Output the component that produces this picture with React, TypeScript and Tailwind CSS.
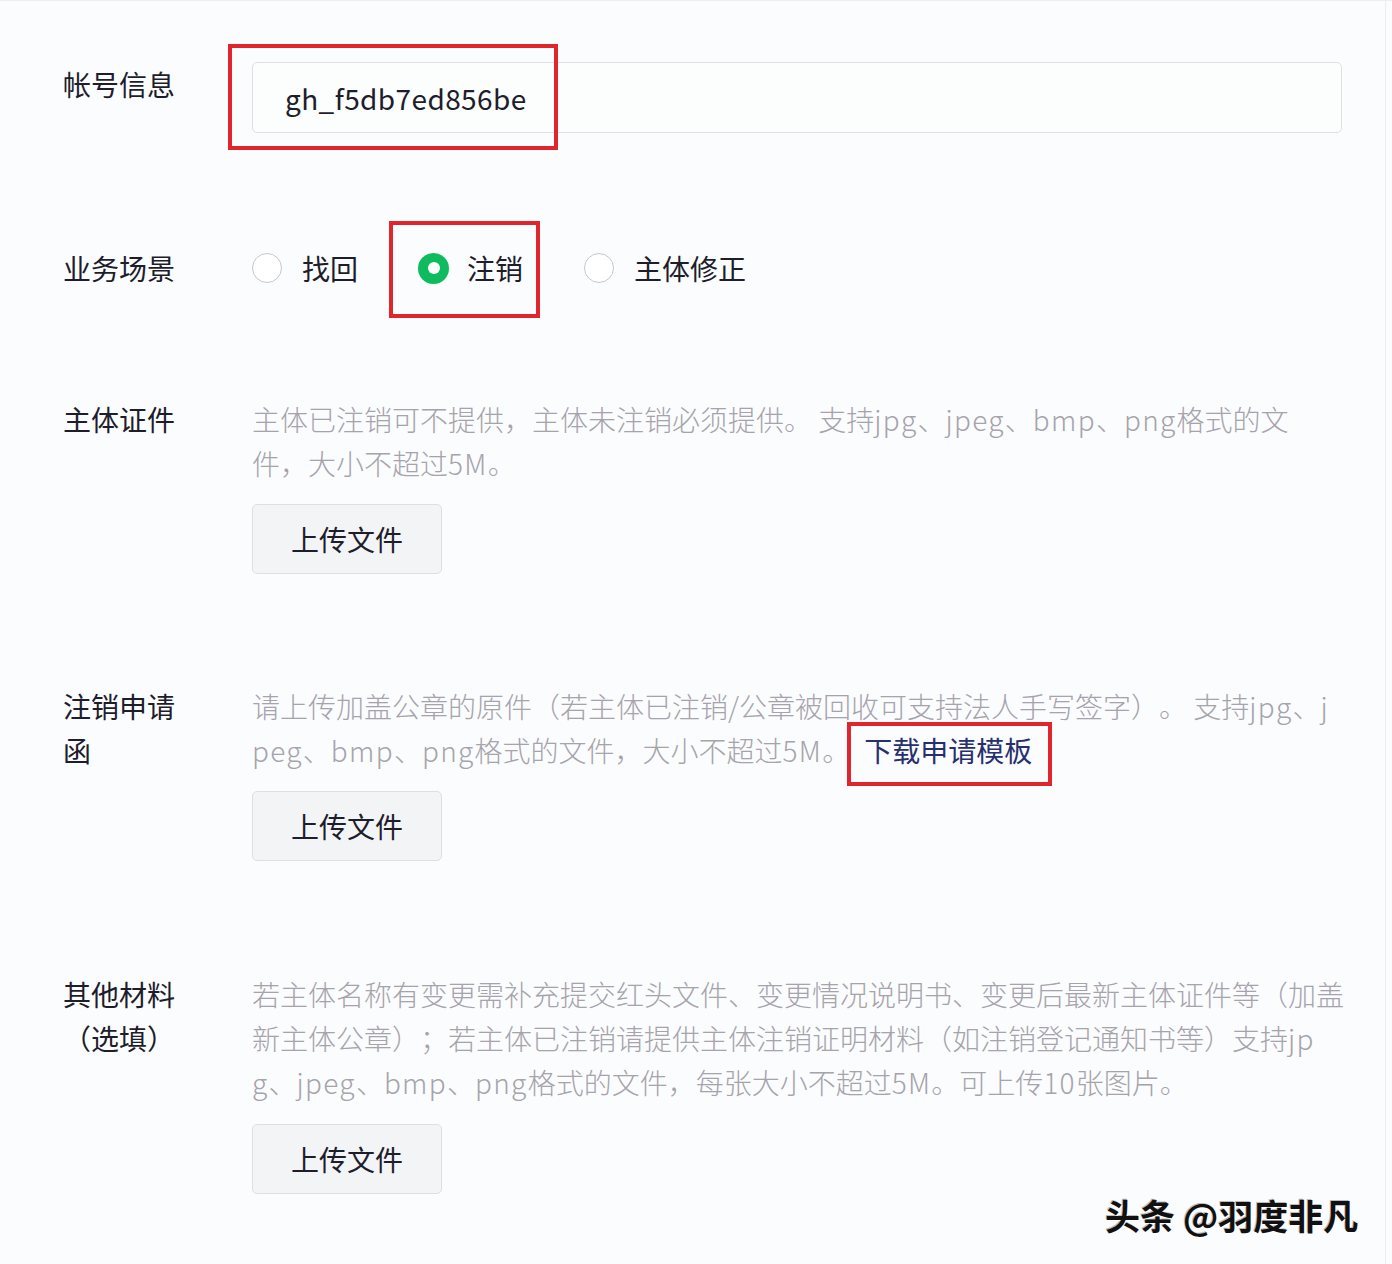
import React from "react";

const FONT = { fontFamily: '"Noto Sans CJK SC", "Noto Sans", sans-serif' };

function Label({ children }: { children: React.ReactNode }) {
  return (
    <div className="w-[189px] shrink-0 text-[28px] leading-[44px] text-[#1e1d2c] [text-spacing-trim:space-all]">
      {children}
    </div>
  );
}

function Latinize({ text }: { text: string }) {
  const parts = text.split(/([A-Za-z0-9]+)/);
  return (
    <>
      {parts.map((p, i) =>
        i % 2 === 1 ? (
          <span key={i} className="tracking-[1.3px]">
            {p}
          </span>
        ) : (
          <React.Fragment key={i}>{p}</React.Fragment>
        )
      )}
    </>
  );
}

function Desc({ lines }: { lines: React.ReactNode[] }) {
  return (
    <div className="text-[28px] leading-[44px] font-light text-[#a6a3ac] [text-spacing-trim:space-all]">
      {lines.map((l, i) => (
        <div key={i} className="whitespace-nowrap">
          {typeof l === "string" ? <Latinize text={l} /> : l}
        </div>
      ))}
    </div>
  );
}

function UploadButton({ className = "" }: { className?: string }) {
  return (
    <button
      className={`w-[190px] h-[70px] rounded-[5px] border border-[#dcdfe4] bg-[#f3f4f6] text-[28px] text-[#1e1d2c] flex items-center justify-center ${className}`}
    >
      上传文件
    </button>
  );
}

function Radio({ checked }: { checked?: boolean }) {
  if (checked) {
    return (
      <span className="w-[31px] h-[31px] rounded-full bg-[#0ebc5f] flex items-center justify-center shrink-0">
        <span className="w-[12px] h-[12px] rounded-full bg-white" />
      </span>
    );
  }
  return <span className="w-[30px] h-[30px] rounded-full border border-[#c4c8ce] bg-white shrink-0" />;
}

export default function App() {
  return (
    <div
      style={FONT}
      className="relative w-[1392px] h-[1264px] bg-[#fbfcfd] border-t border-[#eceef1] overflow-hidden"
    >
      <div className="absolute right-[6px] top-0 bottom-0 w-px bg-[#eceef1]" />
      <div className="pl-[63px] flex flex-col">
        {/* 帐号信息 */}
        <div className="flex mt-[61px]">
          <Label>帐号信息</Label>
          <div className="relative w-[1090px]">
            <div className="h-[71px] rounded-[5px] border border-[#dde1e6] bg-[#fcfdfd] flex items-center pl-[32px] text-[28px] tracking-[0.4px] text-[#1e1d2c]">
              gh_f5db7ed856be
            </div>
            <div className="absolute left-[-24px] top-[-18px] w-[330px] h-[106px] border-[4px] border-[#e0262c]" />
          </div>
        </div>

        {/* 业务场景 */}
        <div className="flex mt-[113px] items-center h-[44px]">
          <Label>业务场景</Label>
          <div className="flex items-center text-[28px] text-[#1e1d2c]">
            <div className="flex items-center gap-[20px]">
              <Radio />
              <span>找回</span>
            </div>
            <div className="relative flex items-center gap-[18px] ml-[60px]">
              <Radio checked />
              <span>注销</span>
              <div className="absolute left-[-29px] top-[-26px] w-[151px] h-[97px] border-[4px] border-[#e0262c]" />
            </div>
            <div className="flex items-center gap-[20px] ml-[61px]">
              <Radio />
              <span>主体修正</span>
            </div>
          </div>
        </div>

        {/* 主体证件 */}
        <div className="flex mt-[107px]">
          <Label>主体证件</Label>
          <div className="flex flex-col">
            <Desc
              lines={[
                "主体已注销可不提供，主体未注销必须提供。 支持jpg、jpeg、bmp、png格式的文",
                "件，大小不超过5M。",
              ]}
            />
            <UploadButton className="mt-[19px]" />
          </div>
        </div>

        {/* 注销申请函 */}
        <div className="flex mt-[110px]">
          <Label>
            注销申请
            <br />函
          </Label>
          <div className="flex flex-col">
            <Desc
              lines={[
                "请上传加盖公章的原件（若主体已注销/公章被回收可支持法人手写签字）。 支持jpg、j",
                <>
                  <Latinize text="peg、bmp、png格式的文件，大小不超过5M。" />
                  <span className="relative ml-[14px] font-normal text-[#27306e]">
                    下载申请模板
                    <span className="absolute left-[-17px] right-[-20px] top-[-8px] bottom-[-16px] border-[4px] border-[#e0262c]" />
                  </span>
                </>,
              ]}
            />
            <UploadButton className="mt-[19px]" />
          </div>
        </div>

        {/* 其他材料 */}
        <div className="flex mt-[111px]">
          <Label>
            其他材料
            <br />（选填）
          </Label>
          <div className="flex flex-col">
            <Desc
              lines={[
                "若主体名称有变更需补充提交红头文件、变更情况说明书、变更后最新主体证件等（加盖",
                "新主体公章）；若主体已注销请提供主体注销证明材料（如注销登记通知书等）支持jp",
                "g、jpeg、bmp、png格式的文件，每张大小不超过5M。可上传10张图片。",
              ]}
            />
            <UploadButton className="mt-[20px]" />
          </div>
        </div>
      </div>

      {/* watermark */}
      <div
        className="absolute left-[1105px] top-[1191px] text-[35px] leading-[46px] font-bold text-[#111] whitespace-nowrap"
        style={{ textShadow: "1px 1px 0 #fff, -1px -1px 0 #bbb" }}
      >
        头条 @羽度非凡
      </div>
    </div>
  );
}
